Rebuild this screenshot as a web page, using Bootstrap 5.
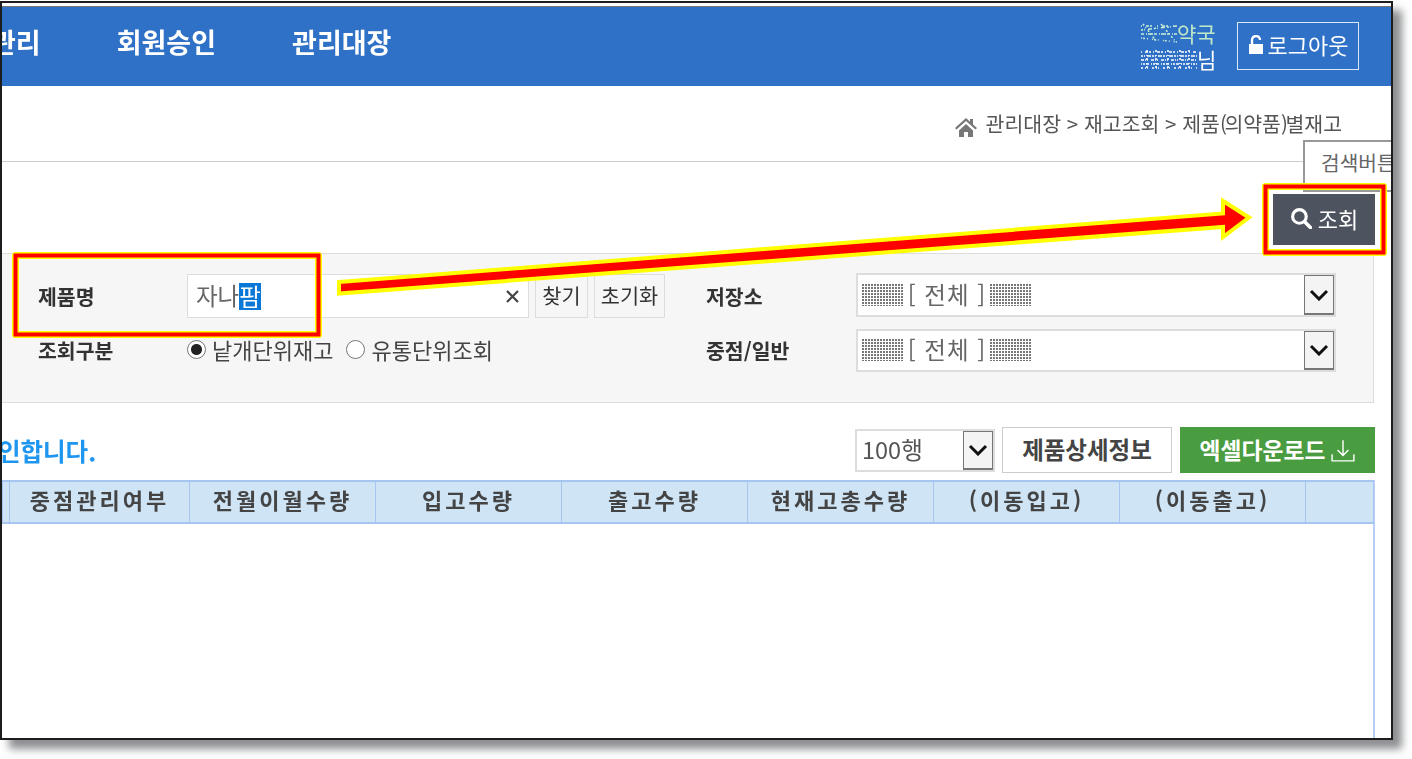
<!DOCTYPE html>
<html lang="ko">
<head>
<meta charset="utf-8">
<title>제품(의약품)별재고</title>
<link href="https://cdn.jsdelivr.net/npm/bootstrap@5.3.0/dist/css/bootstrap.min.css" rel="stylesheet">
<style>
html,body{height:100%;background:#fff;overflow:hidden}
body{font-family:"Noto Sans CJK KR","Liberation Sans",sans-serif;color:#333;position:relative}
.shot-frame{position:relative;width:1393px;height:739px;margin-top:1px;border:2px solid #1d1d1d;box-shadow:9px 9px 8px #8d8f92;background:#fff;overflow:hidden;padding-top:3px;filter:blur(.45px)}
.top-band{height:80px;background:#2f71c6;border-top:1px solid #777;color:#fff;padding-right:32px;overflow:hidden}
.nav-items{gap:76px;margin-left:-11px}
.nav-items span{font-size:27px;font-weight:700;line-height:1;margin-top:-10px}
.who{width:76px;font-size:21px;margin-right:20px;margin-top:-2px}
.who-line{height:26px}
.who-line span{line-height:22px}
.who-green{color:#bfe8c8}
.logout{width:122px;height:48px;border:1px solid #dbe7f6;color:#fff;font-size:22px;border-radius:0;padding:0 0 3px;margin-top:-1px;gap:4px}
.logout:hover{color:#fff}
.crumb-row{height:76px;border-bottom:1px solid #ccc;padding:27px 49px 0 0;font-size:20.5px;color:#555;line-height:20px}
.crumb-row svg{margin-right:9px;margin-left:2px}
.paren{letter-spacing:-2.500px}
.search-line{padding:32px 16px 8px 0}
.btn-query{width:102px;height:51px;background:#4d5460;color:#fff;font-size:22px;border-radius:0;border:1px solid #4d5460;padding:0 0 3px;gap:6px}
.filter-panel{height:150px;margin-right:17px;background:#f6f6f6;border:1px solid #ddd;border-left:0;padding-top:19px;margin-bottom:24px}
.filter-line{height:44px;margin-bottom:11px}
.lab{font-size:20.5px;font-weight:700;color:#333;line-height:1;padding-top:3px}
.line-two .lab{padding-top:0}
.lab-a{padding-left:36px;flex:none;box-sizing:content-box;width:149px}
.left-part{width:704px;flex:none}
.lab-b{width:150px;flex:none}
.name-box{width:342px;height:44px;margin-top:2px;background:#fff;border:1px solid #ddd;padding:0 8px;font-size:23.5px;color:#666;flex:none}
.sel-word{background:#0a78d7;color:#fff;line-height:27px;display:inline-block}
.soft-btn{height:44px;margin-top:2px;background:#f6f6f6;border:1px solid #ddd;border-radius:0;color:#333;font-size:20.8px;padding:0;flex:none;margin-left:6px}
.w-find{width:53px}.w-reset{width:71px}
.pick-box{width:480px;height:44px;background:#fff;border:2px solid #ddd;flex:none;padding-left:4px;font-size:23.5px;color:#666}
.line-two .pick-box{height:43px}
.dots{display:inline-block;width:42px;height:22px;background:linear-gradient(90deg,#0000 2px,#fff 2px) 0 0/3px 3px,linear-gradient(#0000 2px,#fff 2px) 0 0/3px 3px,#777;flex:none}
.pick-word{width:86px;letter-spacing:1px;white-space:pre;text-align:center}
.drop-btn{width:30px;height:40px;margin-left:auto;background:#f4f4f4;border:1px solid #777;border-bottom-width:2px;flex:none}
.line-two .drop-btn{height:39px}
.radio-dot{appearance:none;width:19px;height:19px;border:1px solid #777;border-radius:50%;background:#fff;margin:0 6px 0 0;flex:none}
.radio-dot:checked{background:radial-gradient(circle,#222 0 5px,#fff 6px)}
.radio-txt{font-size:22px;color:#444;line-height:1;margin-right:13px}
.radio-set{margin-bottom:2px}
.tool-line{height:46px;margin:0 16px 7px 0}
.notice{font-size:24.5px;font-weight:700;color:#1e96f0;line-height:1;padding-top:2px;margin-left:-4px}
.rows-box{width:140px;height:43px;border:2px solid #ddd;background:#fff;padding-left:5px;margin-left:-1px;font-size:23.5px;color:#555;margin-right:7px}
.rows-box .drop-btn{height:39px}
.detail-btn{width:170px;height:46px;border:1px solid #ccc;border-radius:0;background:#fff;color:#444;font-size:23.5px;font-weight:700;padding:0;margin-right:8px}
.excel-btn{width:195px;height:46px;background:#4a9c40;border:0;border-radius:0;color:#fff;font-size:22.8px;font-weight:700;padding:0;gap:6px}
.excel-btn:hover,.detail-btn:hover,.soft-btn:hover{background:inherit}
.grid-wrap{width:1373px;height:264px;border-right:2px solid #b7cff5}
.grid-head{table-layout:fixed;width:1371px;margin:0;border-collapse:collapse}
.grid-head th{height:42px;background:#cfe5f6;border:1px solid #a8c4f0;border-width:2px 1px;font-size:22px;letter-spacing:3px;font-weight:700;color:#444;text-align:center;padding:0 0 5px;white-space:nowrap;box-shadow:none}
.tip-flag{position:absolute;left:1301px;top:137px;width:120px;height:52px;border:2px solid #999;background:#fff;color:#666;font-size:20.3px;padding:8px 0 0 16px;line-height:24px}
.mark-layer{position:absolute;left:0;top:0;width:1412px;height:759px;pointer-events:none;filter:blur(.35px)}
</style>
</head>
<body>
<div class="shot-frame">
  <div class="top-band d-flex align-items-center">
    <div class="nav-items d-flex flex-grow-1"><span>관리</span><span>회원승인</span><span>관리대장</span></div>
    <div class="who">
      <div class="who-line d-flex align-items-center who-green">
        <svg width="36" height="20" viewBox="0 0 36 20" class="flex-none"><g fill="none" stroke="#c9efd2" stroke-width="1.500"><path d="M0 3H36" stroke-dasharray="1 4 3 1 2 5"/><path d="M0 7 36 3" stroke-dasharray="2 1 1 3 4 2"/><path d="M0 11H36" stroke-dasharray="3 2 1 1 5 1"/><path d="M0 15 36 19" stroke-dasharray="1 1 2 2 1 4"/><path d="M2 1 16 19M20 1 34 18" stroke-dasharray="2 2 1 3"/></g></svg><span>약국</span>
      </div>
      <div class="who-line d-flex align-items-center">
        <svg width="56" height="20" viewBox="0 0 56 20" class="flex-none"><g fill="none" stroke="#fff" stroke-width="1.600"><path d="M0 3H56" stroke-dasharray="1 3 3 1 2 2"/><path d="M0 7H56" stroke-dasharray="2 1 1 2 4 1"/><path d="M0 11H56" stroke-dasharray="3 1 1 1 1 3"/><path d="M0 15H56" stroke-dasharray="1 1 2 1 3 2"/><path d="M0 19H56" stroke-dasharray="2 2 1 1 1 4"/><path d="M6 1v18M15 1v18M27 1v18M39 1v18M48 1v18" stroke-dasharray="2 3 1 2"/></g></svg><span>님</span>
      </div>
    </div>
    <button class="btn logout d-flex align-items-center justify-content-center" type="button">
      <svg width="16" height="20" viewBox="0 0 16 20"><path d="M1 9h14v10H1z" fill="#fff"/><path d="M4 9V5a4 4 0 0 1 8 0" fill="none" stroke="#fff" stroke-width="2.400"/></svg>로그아웃
    </button>
  </div>

  <div class="crumb-row d-flex justify-content-end align-items-start">
    <svg width="22" height="20" viewBox="0 0 22 20" class="mt-1"><path d="M11 1 0 11l1.500 1.500L11 4l9.500 8.500L22 11l-4-3.600V2h-3v2.700z" fill="#777"/><path d="M4 13.500 11 7l7 6.500V20h-5v-5H9v5H4z" fill="#777"/></svg>
    <span>관리대장 &gt; 재고조회 &gt; 제품<span class="paren">(</span>의약품<span class="paren">)</span>별재고</span>
  </div>

  <div class="search-line d-flex justify-content-end">
    <button class="btn btn-query d-flex align-items-center justify-content-center" type="button">
      <svg width="22" height="22" viewBox="0 0 21 21"><circle cx="9" cy="9" r="6.500" fill="none" stroke="#fff" stroke-width="3"/><path d="m14 14 5.500 5.500" stroke="#fff" stroke-width="3.400" stroke-linecap="round"/></svg>조회
    </button>
  </div>

  <div class="filter-panel">
    <div class="filter-line d-flex align-items-center">
      <div class="left-part d-flex align-items-center">
        <div class="lab lab-a">제품명</div>
        <div class="name-box d-flex align-items-center"><span>자나</span><span class="sel-word">팜</span>
          <svg class="ms-auto" width="15" height="15" viewBox="0 0 15 15"><path d="m2 2 11 11M13 2 2 13" stroke="#444" stroke-width="2.200"/></svg>
        </div>
        <button class="btn soft-btn w-find" type="button">찾기</button>
        <button class="btn soft-btn w-reset" type="button">초기화</button>
      </div>
      <div class="lab lab-b">저장소</div>
      <div class="pick-box d-flex align-items-center"><i class="dots"></i><span class="pick-word">[ 전체 ]</span><i class="dots"></i>
        <span class="drop-btn d-flex align-items-center justify-content-center"><svg width="20" height="12" viewBox="0 0 20 12"><path d="m2 2 8 8 8-8" fill="none" stroke="#111" stroke-width="3"/></svg></span>
      </div>
    </div>
    <div class="filter-line line-two d-flex align-items-center">
      <div class="left-part d-flex align-items-center">
        <div class="lab lab-a">조회구분</div>
        <div class="radio-set d-flex align-items-center">
          <input class="radio-dot" type="radio" name="unit" checked aria-label="낱개단위재고"><span class="radio-txt">낱개단위재고</span>
          <input class="radio-dot" type="radio" name="unit" aria-label="유통단위조회"><span class="radio-txt">유통단위조회</span>
        </div>
      </div>
      <div class="lab lab-b">중점/일반</div>
      <div class="pick-box d-flex align-items-center"><i class="dots"></i><span class="pick-word">[ 전체 ]</span><i class="dots"></i>
        <span class="drop-btn d-flex align-items-center justify-content-center"><svg width="20" height="12" viewBox="0 0 20 12"><path d="m2 2 8 8 8-8" fill="none" stroke="#111" stroke-width="3"/></svg></span>
      </div>
    </div>
  </div>

  <div class="tool-line d-flex align-items-center">
    <div class="notice me-auto">인합니다.</div>
    <div class="rows-box d-flex align-items-center"><span>100행</span>
      <span class="drop-btn d-flex align-items-center justify-content-center"><svg width="20" height="12" viewBox="0 0 20 12"><path d="m2 2 8 8 8-8" fill="none" stroke="#111" stroke-width="3"/></svg></span>
    </div>
    <button class="btn detail-btn" type="button">제품상세정보</button>
    <button class="btn excel-btn d-flex align-items-center justify-content-center" type="button">엑셀다운로드
      <svg width="24" height="24" viewBox="0 0 22 22"><path d="M11 2v14M6 11l5 5 5-5M1 15v6h20v-6" fill="none" stroke="#fff" stroke-width="1.300"/></svg>
    </button>
  </div>

  <div class="grid-wrap">
    <table class="grid-head">
      <colgroup><col style="width:7px"><col style="width:180px"><col style="width:186px"><col style="width:186px"><col style="width:186px"><col style="width:186px"><col style="width:186px"><col style="width:186px"><col style="width:68px"></colgroup>
      <thead><tr><th></th><th>중점관리여부</th><th>전월이월수량</th><th>입고수량</th><th>출고수량</th><th>현재고총수량</th><th>(이동입고)</th><th>(이동출고)</th><th></th></tr></thead>
    </table>
  </div>

  <div class="tip-flag">검색버튼</div>
</div>

<svg class="mark-layer" viewBox="0 0 1412 759" aria-hidden="true">
  <g fill="none">
    <rect x="15.500" y="255.500" width="303" height="79" stroke="#ffff00" stroke-width="7" stroke-linejoin="round"/>
    <rect x="15.500" y="255.500" width="303" height="79" stroke="#ff0000" stroke-width="4"/>
    <rect x="1265.500" y="186.500" width="118" height="66" stroke="#ffff00" stroke-width="7" stroke-linejoin="round"/>
    <rect x="1265.500" y="186.500" width="118" height="66" stroke="#ff0000" stroke-width="4"/>
  </g>
  <path d="M339 282 1223 213.500V201L1249 217.500 1223 237V227L339 293.500z" fill="#ff0000" stroke="#ffff00" stroke-width="4"/>
</svg>
<script src="https://cdn.jsdelivr.net/npm/bootstrap@5.3.0/dist/js/bootstrap.bundle.min.js"></script>
</body>
</html>
